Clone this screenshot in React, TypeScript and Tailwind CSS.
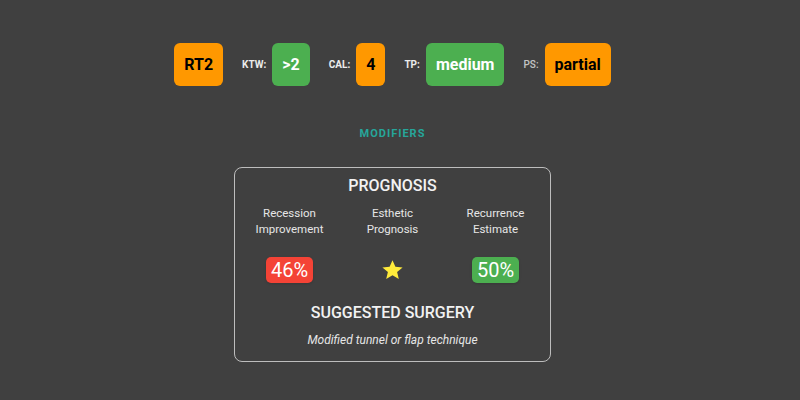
import React from 'react';

type Chip = {
  label?: string;
  value: string;
  tone: 'orange' | 'green';
  dim?: boolean;
};

const chips: Chip[] = [
  { value: 'RT2', tone: 'orange' },
  { label: 'KTW:', value: '>2', tone: 'green' },
  { label: 'CAL:', value: '4', tone: 'orange' },
  { label: 'TP:', value: 'medium', tone: 'green' },
  { label: 'PS:', value: 'partial', tone: 'orange', dim: true },
];

const StarIcon = () => (
  <svg width="25" height="24" viewBox="0 0 24 24" className="fill-[#ffeb3b]">
    <path d="M12 2.2l2.9 6.6 7.2.6-5.5 4.7 1.7 7-6.3-3.8-6.3 3.8 1.7-7L1.9 9.4l7.2-.6z" />
  </svg>
);

const App: React.FC = () => {
  return (
    <div className="min-h-screen w-full bg-[#404040] font-['Roboto',sans-serif]">
      <div className="w-[785px] flex flex-col items-center pt-[43px]">
        {/* Classification chips */}
        <div className="flex items-center gap-[19px]">
          {chips.map((c) => (
            <div key={c.value} className="flex items-center gap-[6px]">
              {c.label && (
                <span
                  className={`text-[10px] leading-none ${
                    c.dim ? 'font-medium text-[#c4c4c4]' : 'font-bold text-[#ececec]'
                  }`}
                >
                  {c.label}
                </span>
              )}
              <div
                className={`h-[43px] px-[10px] rounded-md flex items-center text-base font-bold ${
                  c.tone === 'orange' ? 'bg-[#ff9800] text-black' : 'bg-[#4caf50] text-white'
                }`}
              >
                {c.value}
              </div>
            </div>
          ))}
        </div>

        <div className="mt-[40px] text-[11px] font-bold tracking-[1px] leading-4 text-[#26a69a]">
          MODIFIERS
        </div>

        {/* Prognosis card */}
        <div className="mt-[25px] w-[317px] border border-[#bdbdbd] rounded-lg pt-[6px] pb-[13px] flex flex-col items-center">
          <h2 className="text-base font-medium leading-6 text-[#f2f2f2]">PROGNOSIS</h2>

          <div className="mt-[7px] grid grid-cols-[repeat(3,103px)] justify-center text-[11.5px] leading-4 text-[#e6e6e6] text-center">
            <div>Recession<br />Improvement</div>
            <div>Esthetic<br />Prognosis</div>
            <div>Recurrence<br />Estimate</div>
          </div>

          <div className="mt-[20px] grid grid-cols-[repeat(3,103px)] justify-center items-center">
            <div className="flex justify-center">
              <span className="h-[26px] px-[5px] rounded-[5px] bg-[#f44336] text-white text-xl leading-[26px] shadow-sm">
                46%
              </span>
            </div>
            <div className="flex justify-center">
              <StarIcon />
            </div>
            <div className="flex justify-center">
              <span className="h-[26px] px-[5px] rounded-[5px] bg-[#4caf50] text-white text-xl leading-[26px] shadow-sm">
                50%
              </span>
            </div>
          </div>

          <h2 className="mt-[18px] text-base font-medium leading-6 text-[#f2f2f2]">SUGGESTED SURGERY</h2>
          <p className="mt-[7px] text-xs italic leading-4 text-[#e6e6e6]">Modified tunnel or flap technique</p>
        </div>
      </div>
    </div>
  );
};

export default App;
